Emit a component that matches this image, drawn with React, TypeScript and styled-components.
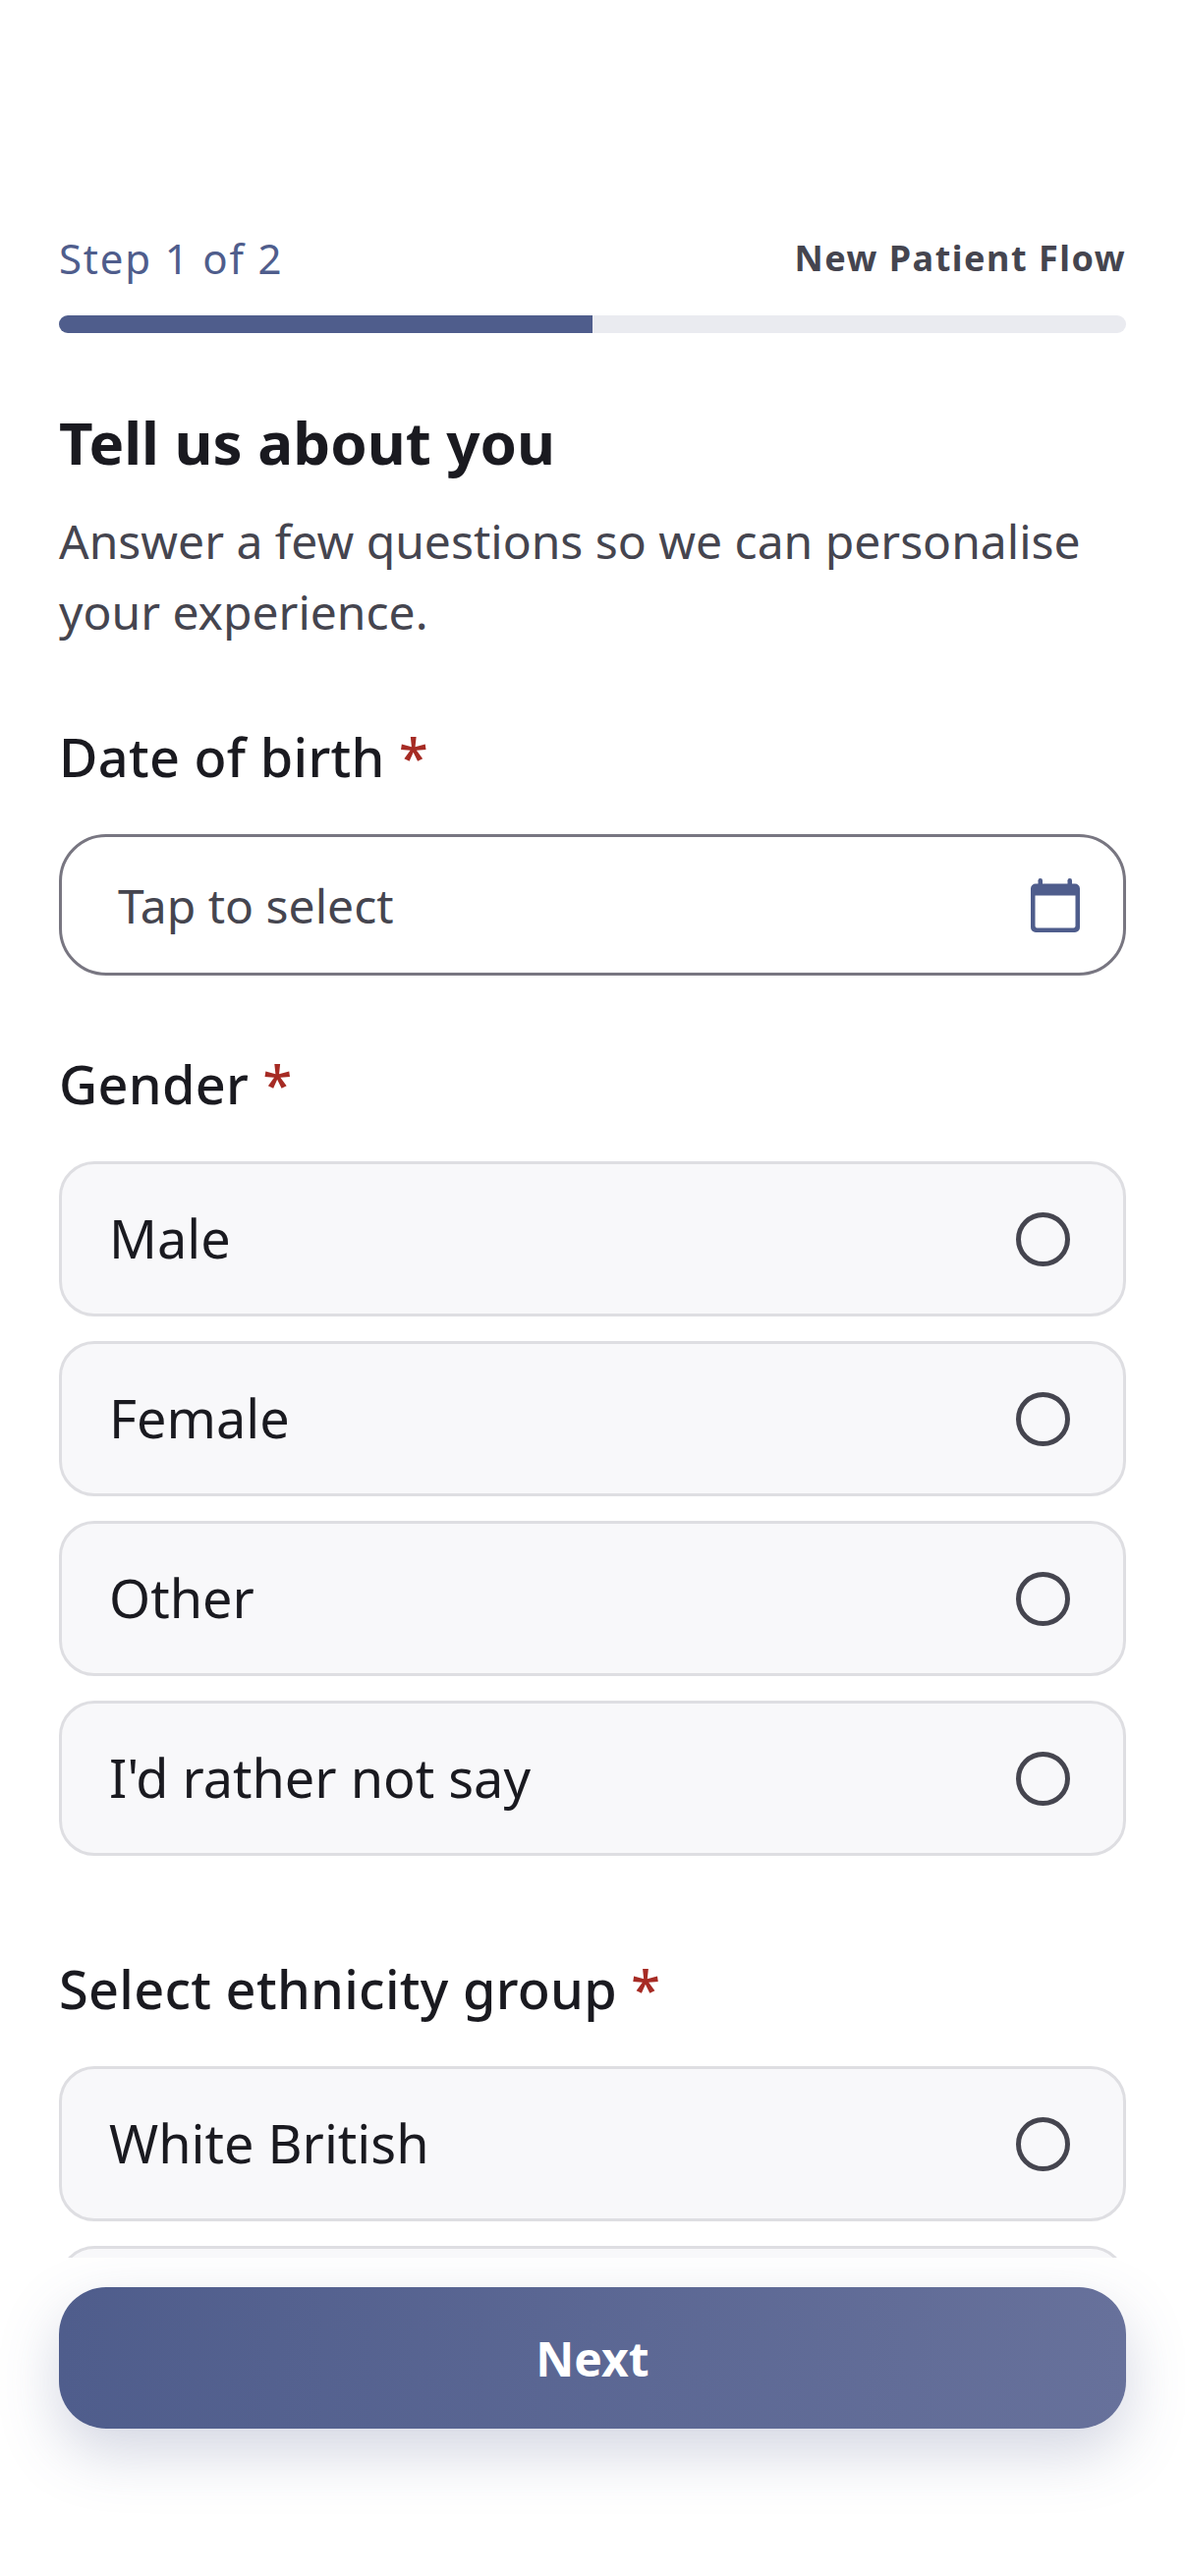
import React from 'react';
import styled, { createGlobalStyle } from 'styled-components';

const GlobalStyle = createGlobalStyle`
  html, body {
    margin: 0;
    padding: 0;
    background: #ffffff;
  }
  * {
    box-sizing: border-box;
  }
`;

const Screen = styled.div`
  width: 1206px;
  height: 2622px;
  display: flex;
  flex-direction: column;
  background: #ffffff;
  font-family: 'Noto Sans', sans-serif;
  color: #1a1a20;
  overflow: hidden;
`;

const Content = styled.main`
  height: 2298px;
  flex-shrink: 0;
  overflow: hidden;
  padding: 229px 60px 0;
`;

const StepRow = styled.div`
  display: flex;
  justify-content: space-between;
  align-items: center;
  height: 66px;
`;

const StepText = styled.span`
  font-size: 42px;
  letter-spacing: 1.8px;
  color: #4f5d8c;
`;

const FlowText = styled.span`
  font-size: 36px;
  font-weight: 700;
  letter-spacing: 1.5px;
  color: #45454f;
`;

const Track = styled.div`
  height: 18px;
  margin-top: 26px;
  border-radius: 9px;
  background: #eaebf0;
  overflow: hidden;
`;

const Fill = styled.div`
  height: 100%;
  background: #4f5d8c;
`;

const Title = styled.h1`
  margin: 69px 0 0;
  font-size: 60px;
  line-height: 84px;
  font-weight: 700;
  color: #1a1a20;
`;

const Subtitle = styled.p`
  margin: 23px 0 0;
  font-size: 48px;
  line-height: 72px;
  color: #45454f;
`;

const Label = styled.div<{ $gap: number }>`
  margin-top: ${(p) => p.$gap}px;
  font-size: 54px;
  line-height: 72px;
  font-weight: 500;
  letter-spacing: 0.3px;
  color: #1a1a20;
`;

const Required = styled.span`
  color: #a62b24;
`;

const DateInput = styled.div`
  height: 144px;
  margin-top: 43px;
  padding: 0 44px 0 57px;
  display: flex;
  align-items: center;
  justify-content: space-between;
  border: 3px solid #787681;
  border-radius: 48px;
  font-size: 48px;
  color: #45454f;
`;

const Options = styled.div`
  margin-top: 43px;
  display: flex;
  flex-direction: column;
  gap: 25px;
`;

const Option = styled.div`
  height: 158px;
  flex-shrink: 0;
  padding: 0 54px 3px 48px;
  display: flex;
  align-items: center;
  justify-content: space-between;
  background: #f8f8fa;
  border: 3px solid #dedee2;
  border-radius: 36px;
  font-size: 54px;
  color: #1a1a20;
`;

const Radio = styled.span`
  width: 55px;
  height: 55px;
  margin-top: 4px;
  flex-shrink: 0;
  border: 5.5px solid #45454f;
  border-radius: 50%;
`;

const Footer = styled.footer`
  flex: 1;
  overflow: hidden;
  padding: 30px 60px 0;
`;

const NextButton = styled.button`
  display: block;
  width: 100%;
  height: 144px;
  border: none;
  border-radius: 48px;
  background: linear-gradient(90deg, #4f5d8c, #67719b);
  box-shadow: 0 24px 60px rgba(79, 93, 140, 0.25);
  font-family: inherit;
  font-size: 48px;
  font-weight: 700;
  color: #ffffff;
`;

const CalendarIcon = () => (
  <svg width="50" height="55" viewBox="0 0 50 55">
    <rect x="7.5" y="0" width="4.5" height="10" rx="2.25" fill="#4f5d8c" />
    <rect x="37.5" y="0" width="4.5" height="10" rx="2.25" fill="#4f5d8c" />
    <path
      fillRule="evenodd"
      fill="#4f5d8c"
      d="M5 5.5H45A5 5 0 0 1 50 10.5V50A5 5 0 0 1 45 55H5A5 5 0 0 1 0 50V10.5A5 5 0 0 1 5 5.5ZM4.5 17.5V48.5A2 2 0 0 0 6.5 50.5H43.5A2 2 0 0 0 45.5 48.5V17.5Z"
    />
  </svg>
);

const genders = ['Male', 'Female', 'Other', "I'd rather not say"];

export default function App() {
  return (
    <>
      <GlobalStyle />
      <Screen>
        <Content>
          <StepRow>
            <StepText>Step 1 of 2</StepText>
            <FlowText>New Patient Flow</FlowText>
          </StepRow>
          <Track>
            <Fill style={{ width: `${(1 / 2) * 100}%` }} />
          </Track>
          <Title>Tell us about you</Title>
          <Subtitle>Answer a few questions so we can personalise your experience.</Subtitle>

          <Label $gap={75}>
            Date of birth <Required>*</Required>
          </Label>
          <DateInput>
            Tap to select
            <CalendarIcon />
          </DateInput>

          <Label $gap={74}>
            Gender <Required>*</Required>
          </Label>
          <Options>
            {genders.map((g) => (
              <Option key={g}>
                {g}
                <Radio />
              </Option>
            ))}
          </Options>

          <Label $gap={99}>
            Select ethnicity group <Required>*</Required>
          </Label>
          <Options>
            <Option>
              White British
              <Radio />
            </Option>
            {/* next card only peeks out above the footer */}
            <Option />
          </Options>
        </Content>
        <Footer>
          <NextButton>Next</NextButton>
        </Footer>
      </Screen>
    </>
  );
}
